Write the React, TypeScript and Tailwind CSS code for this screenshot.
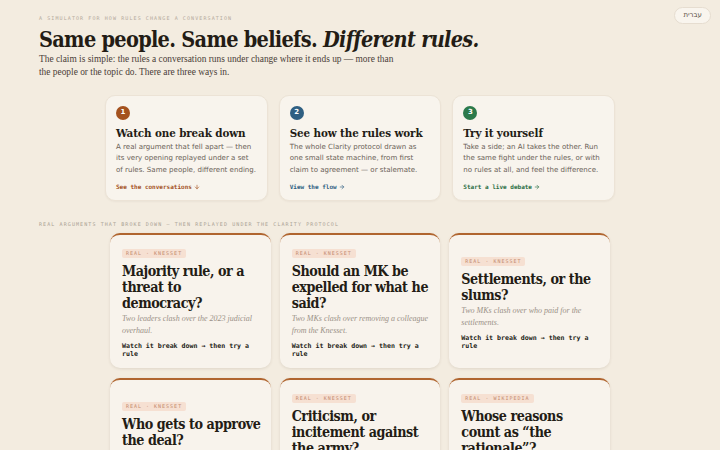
import { ArrowDown, ArrowRight } from "lucide-react";

const display = "font-['DejaVu_Serif_Condensed','DejaVu_Serif',serif] [font-stretch:condensed]";
const mono = "font-['DejaVu_Sans_Mono','Liberation_Mono',monospace]";

const ways = [
  {
    n: "1",
    title: "Watch one break down",
    body: "A real argument that fell apart — then its very opening replayed under a set of rules. Same people, different ending.",
    link: "See the conversations",
    badge: "bg-[#a4521f]",
    linkColor: "text-[#a4521f]",
    down: true,
  },
  {
    n: "2",
    title: "See how the rules work",
    body: "The whole Clarity protocol drawn as one small state machine, from first claim to agreement — or stalemate.",
    link: "View the flow",
    badge: "bg-[#2f5f82]",
    linkColor: "text-[#2f5f82]",
    down: false,
  },
  {
    n: "3",
    title: "Try it yourself",
    body: "Take a side; an AI takes the other. Run the same fight under the rules, or with no rules at all, and feel the difference.",
    link: "Start a live debate",
    badge: "bg-[#2c7a4b]",
    linkColor: "text-[#2c6e45]",
    down: false,
  },
];

const cases = [
  {
    tag: "REAL · KNESSET",
    title: "Majority rule, or a threat to democracy?",
    sub: "Two leaders clash over the 2023 judicial overhaul.",
  },
  {
    tag: "REAL · KNESSET",
    title: "Should an MK be expelled for what he said?",
    sub: "Two MKs clash over removing a colleague from the Knesset.",
  },
  {
    tag: "REAL · KNESSET",
    title: "Settlements, or the slums?",
    sub: "Two MKs clash over who paid for the settlements.",
  },
  {
    tag: "REAL · KNESSET",
    title: "Who gets to approve the deal?",
    sub: "Two leaders clash over who signs off on the agreement.",
  },
  {
    tag: "REAL · KNESSET",
    title: "Criticism, or incitement against the army?",
    sub: "Two MKs clash over what may be said about soldiers.",
  },
  {
    tag: "REAL · WIKIPEDIA",
    title: "Whose reasons count as “the rationale”?",
    sub: "Two editors clash over how an article explains a decision.",
  },
];

export default function App() {
  return (
    <div className="min-h-screen bg-[#f3ece0] text-[#231c15] relative overflow-hidden">
      <button className="absolute right-[9px] top-[7px] h-[17px] px-[8px] rounded-full bg-[#f9f5ee] border border-[#e6ddd0] text-[7px] text-[#5b5248] font-['DejaVu_Sans',sans-serif]">
        עברית
      </button>

      <header className="px-[39px] pt-[15px]">
        <div className={`${mono} text-[5px] tracking-[1.1px] text-[#b3aa9c] uppercase`}>
          A simulator for how rules change a conversation
        </div>
        <h1 className={`${display} font-bold text-[21.5px] leading-[25px] tracking-[-0.7px] mt-[4px]`}>
          Same people. Same beliefs. <em className="italic">Different rules.</em>
        </h1>
        <p className="font-['Liberation_Serif',serif] text-[9.4px] leading-[13px] text-[#4a4038] w-[360px] mt-[1px]">
          The claim is simple: the rules a conversation runs under change where it ends up — more than the people or the topic do. There are three ways in.
        </p>
      </header>

      <section className="mx-auto w-[510px] grid grid-cols-3 gap-[11px] mt-[16px]">
        {ways.map((w) => (
          <div
            key={w.n}
            className="bg-[#f8f4ed] border border-[#ece3d6] rounded-[10px] px-[10px] pt-[10px] pb-[9px] shadow-[0_1px_2px_rgba(80,60,30,0.05)]"
          >
            <div className={`w-[14px] h-[14px] rounded-full ${w.badge} text-white text-[7px] font-bold flex items-center justify-center font-['DejaVu_Sans',sans-serif]`}>
              {w.n}
            </div>
            <h3 className={`${display} font-bold text-[11.5px] leading-[14px] mt-[6px] tracking-[-0.1px]`}>{w.title}</h3>
            <p className="font-['DejaVu_Sans',sans-serif] text-[7.05px] leading-[11.6px] text-[#6b6258] mt-[1px]">{w.body}</p>
            <div className={`${mono} ${w.linkColor} font-bold text-[6px] mt-[7px] flex items-center gap-[2px]`}>
              {w.link}
              {w.down ? <ArrowDown className="w-[6px] h-[6px]" strokeWidth={2.5} /> : <ArrowRight className="w-[6px] h-[6px]" strokeWidth={2.5} />}
            </div>
          </div>
        ))}
      </section>

      <div className={`${mono} text-[5px] tracking-[1.1px] text-[#aaa294] uppercase px-[39px] mt-[20px]`}>
        Real arguments that broke down — then replayed under the Clarity protocol
      </div>

      <section className="mx-auto w-[500px] grid grid-cols-3 gap-x-[9px] gap-y-[10px] mt-[4px]">
        {cases.map((c) => (
          <div
            key={c.title}
            className="bg-[#f8f3ec] rounded-[10px] border-t-2 border-[#b0652f] shadow-[0_1px_3px_rgba(80,60,30,0.12)] pl-[12px] pr-[10px] pt-[14px] pb-[10px] flex flex-col justify-center"
          >
            <div className="flex">
              <span className={`${mono} bg-[#f6e0d2] text-[#c48a6e] text-[5px] leading-[5px] tracking-[1px] px-[4px] py-[2px] rounded-[2px]`}>
                {c.tag}
              </span>
            </div>
            <h3 className={`${display} font-bold text-[14.2px] leading-[16px] tracking-[-0.45px] mt-[5px]`}>{c.title}</h3>
            <p className="font-['Liberation_Serif',serif] italic text-[8px] leading-[12px] text-[#9a9187] mt-[2px]">{c.sub}</p>
            <div className={`${mono} font-bold text-[6.6px] leading-[8px] text-[#231c15] mt-[5px]`}>
              Watch it break down → then try a rule
            </div>
          </div>
        ))}
      </section>
    </div>
  );
}
